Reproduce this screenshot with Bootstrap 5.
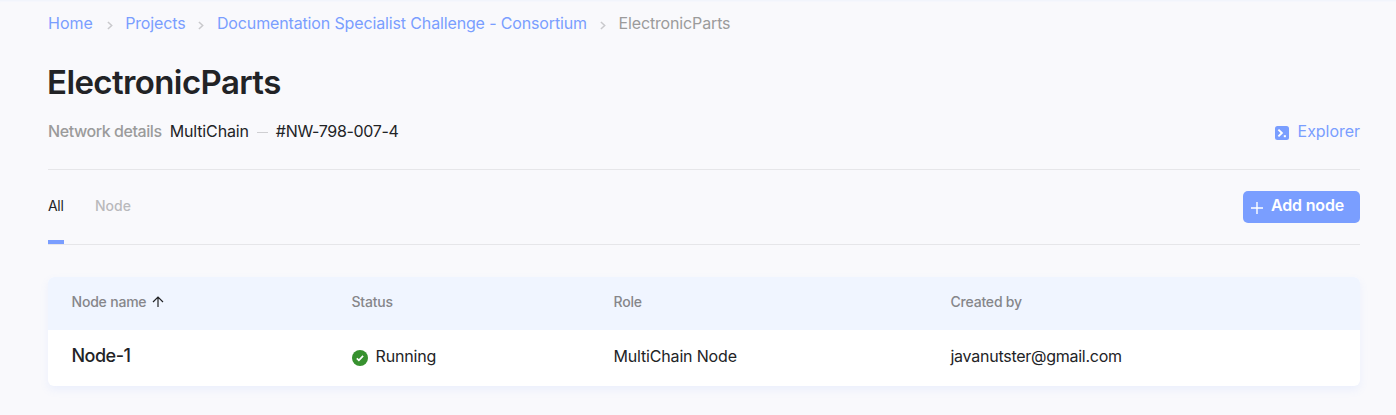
<!DOCTYPE html>
<html lang="en">
<head>
<meta charset="utf-8">
<meta name="viewport" content="width=device-width, initial-scale=1">
<title>ElectronicParts</title>
<link href="https://cdn.jsdelivr.net/npm/bootstrap@5.3.0/dist/css/bootstrap.min.css" rel="stylesheet">
<style>
  :root { --brand: #7a9eff; --ink: #222326; --muted: #9b9b9b; }
  body { font-family: Inter, "Liberation Sans", sans-serif; font-size: 16px; line-height: 24px; letter-spacing: -.14px; color: var(--ink); background: #f9f9fc; box-shadow: inset 0 2px 2px -1px #eff3fd; min-height: 100vh; overflow: hidden; }
  a, a:hover { color: var(--brand); }
  .page { padding: 11px 36px 0 48px; }
  .crumbs .sep { width: 6px; height: 9px; margin: 4px 12.5px 0 13px; }
  .crumbs .home { letter-spacing: 0; margin-right: .8px; }
  .crumbs .here { color: var(--muted); letter-spacing: -.14px; }
  .title { font-size: 33px; line-height: 44px; font-weight: 600; letter-spacing: -.6px; margin: 25px 0 0 -1px; }
  .details { margin-top: 15px; height: 51px; border-bottom: 1px solid #e6e6e9; }
  .details .lbl { color: var(--muted); font-weight: 500; letter-spacing: -.43px; margin-right: 8px; }
  .dash { width: 11px; height: 1px; background: #cfcfd2; margin: 3px 8px 0 8px; }
  .netid { letter-spacing: -.32px; }
  .explorer { letter-spacing: -.04px; }
  .explorer svg { margin: 4px 9px 0 0; }
  .tabbar { height: 75px; border-bottom: 1px solid #e6e6e9; }
  .tabs { gap: 31px; font-size: 14px; }
  .tabs .nav-link { padding: 24px 0 0; height: 74px; color: #b9b9bc; font-weight: 500; letter-spacing: 0; border-radius: 0; }
  .tabs .nav-link.active { color: var(--ink); font-weight: 400; width: 16px; letter-spacing: -.3px; border-bottom: 4px solid var(--brand); }
  .add, .add:hover { width: 117px; height: 32px; margin-top: 21px; padding: 0 0 4px 8px; border: 0; border-radius: 5px; background: var(--brand); color: #fff; font-weight: 600; letter-spacing: -.17px; line-height: 24px; }
  .add svg { margin: 6px 8px 0 0; }
  .panel { margin-top: 32px; border-radius: 6px; overflow: hidden; background: #fff; box-shadow: 0 4px 8px rgba(122, 158, 255, .1); }
  .nodes { table-layout: fixed; width: 100%; letter-spacing: -.17px; }
  .nodes th { background: #f0f5ff; height: 53px; padding: 0 0 4px; font-size: 14px; font-weight: 500; color: #86868a; letter-spacing: -.2px; vertical-align: middle; }
  .nodes td { height: 56px; padding: 0 0 4px; vertical-align: middle; }
  .nodes th:first-child, .nodes td:first-child { padding-left: 23.5px; }
  .nodes .name { font-size: 18px; font-weight: 500; letter-spacing: -.5px; }
  .sort { margin-left: 2px; }
  .nodes .mail { letter-spacing: -.26px; }
</style>
</head>
<body>
<main class="page">
  <nav class="crumbs d-flex align-items-center" aria-label="breadcrumb">
    <a class="home text-decoration-none" href="#">Home</a>
    <svg class="sep" viewBox="0 0 6 9" fill="none" stroke="#c9c9cc" stroke-width="1.5"><path d="M.9 1 4.7 4.5 .9 8"/></svg>
    <a class="text-decoration-none" href="#">Projects</a>
    <svg class="sep" viewBox="0 0 6 9" fill="none" stroke="#c9c9cc" stroke-width="1.5"><path d="M.9 1 4.7 4.5 .9 8"/></svg>
    <a class="text-decoration-none" href="#">Documentation Specialist Challenge - Consortium</a>
    <svg class="sep" viewBox="0 0 6 9" fill="none" stroke="#c9c9cc" stroke-width="1.5"><path d="M.9 1 4.7 4.5 .9 8"/></svg>
    <span class="here">ElectronicParts</span>
  </nav>

  <h1 class="title">ElectronicParts</h1>

  <div class="details d-flex justify-content-between align-items-start">
    <div class="d-flex align-items-center">
      <span class="lbl">Network details</span>
      <span>MultiChain</span>
      <span class="dash"></span>
      <span class="netid">#NW-798-007-4</span>
    </div>
    <a class="explorer d-flex align-items-center text-decoration-none" href="#">
      <svg width="14" height="14" viewBox="0 0 14 14"><rect width="14" height="14" rx="2.5" fill="#7a9eff"/><path d="M3.4 3.6 6.9 7 3.4 10.4" fill="none" stroke="#fff" stroke-width="1.9"/><path d="M8.8 9.2h2.1v2H8.8z" fill="#fff"/></svg>
      Explorer
    </a>
  </div>

  <div class="tabbar d-flex justify-content-between align-items-start">
    <div class="tabs nav">
      <a class="nav-link active" href="#">All</a>
      <a class="nav-link" href="#">Node</a>
    </div>
    <button class="add btn d-flex align-items-center" type="button">
      <svg width="12" height="12" viewBox="0 0 12 12" stroke="#fff" stroke-width="1.4"><path d="M6 0v12M0 6h12"/></svg>
      Add node
    </button>
  </div>

  <div class="panel">
    <table class="nodes">
      <colgroup><col style="width:303.5px"><col style="width:262px"><col style="width:337px"><col></colgroup>
      <thead>
        <tr>
          <th scope="col">Node name <svg class="sort align-baseline" width="12" height="11" viewBox="0 0 12 11" fill="none" stroke="#222326" stroke-width="1.2"><path d="M6 11V1M1 6l5-5 5 5"/></svg></th>
          <th scope="col">Status</th>
          <th scope="col">Role</th>
          <th scope="col">Created by</th>
        </tr>
      </thead>
      <tbody>
        <tr>
          <td class="name">Node-1</td>
          <td>
            <div class="d-flex align-items-center">
              <svg class="me-2 mt-1" width="16" height="16" viewBox="0 0 16 16"><circle cx="8" cy="8" r="8" fill="#37912f"/><path d="m4.8 8.3 2.1 2 4.2-4.4" fill="none" stroke="#fff" stroke-width="1.7"/></svg>
              Running
            </div>
          </td>
          <td>MultiChain Node</td>
          <td class="mail">javanutster@gmail.com</td>
        </tr>
      </tbody>
    </table>
  </div>
</main>
<script src="https://cdn.jsdelivr.net/npm/bootstrap@5.3.0/dist/js/bootstrap.bundle.min.js"></script>
</body>
</html>
